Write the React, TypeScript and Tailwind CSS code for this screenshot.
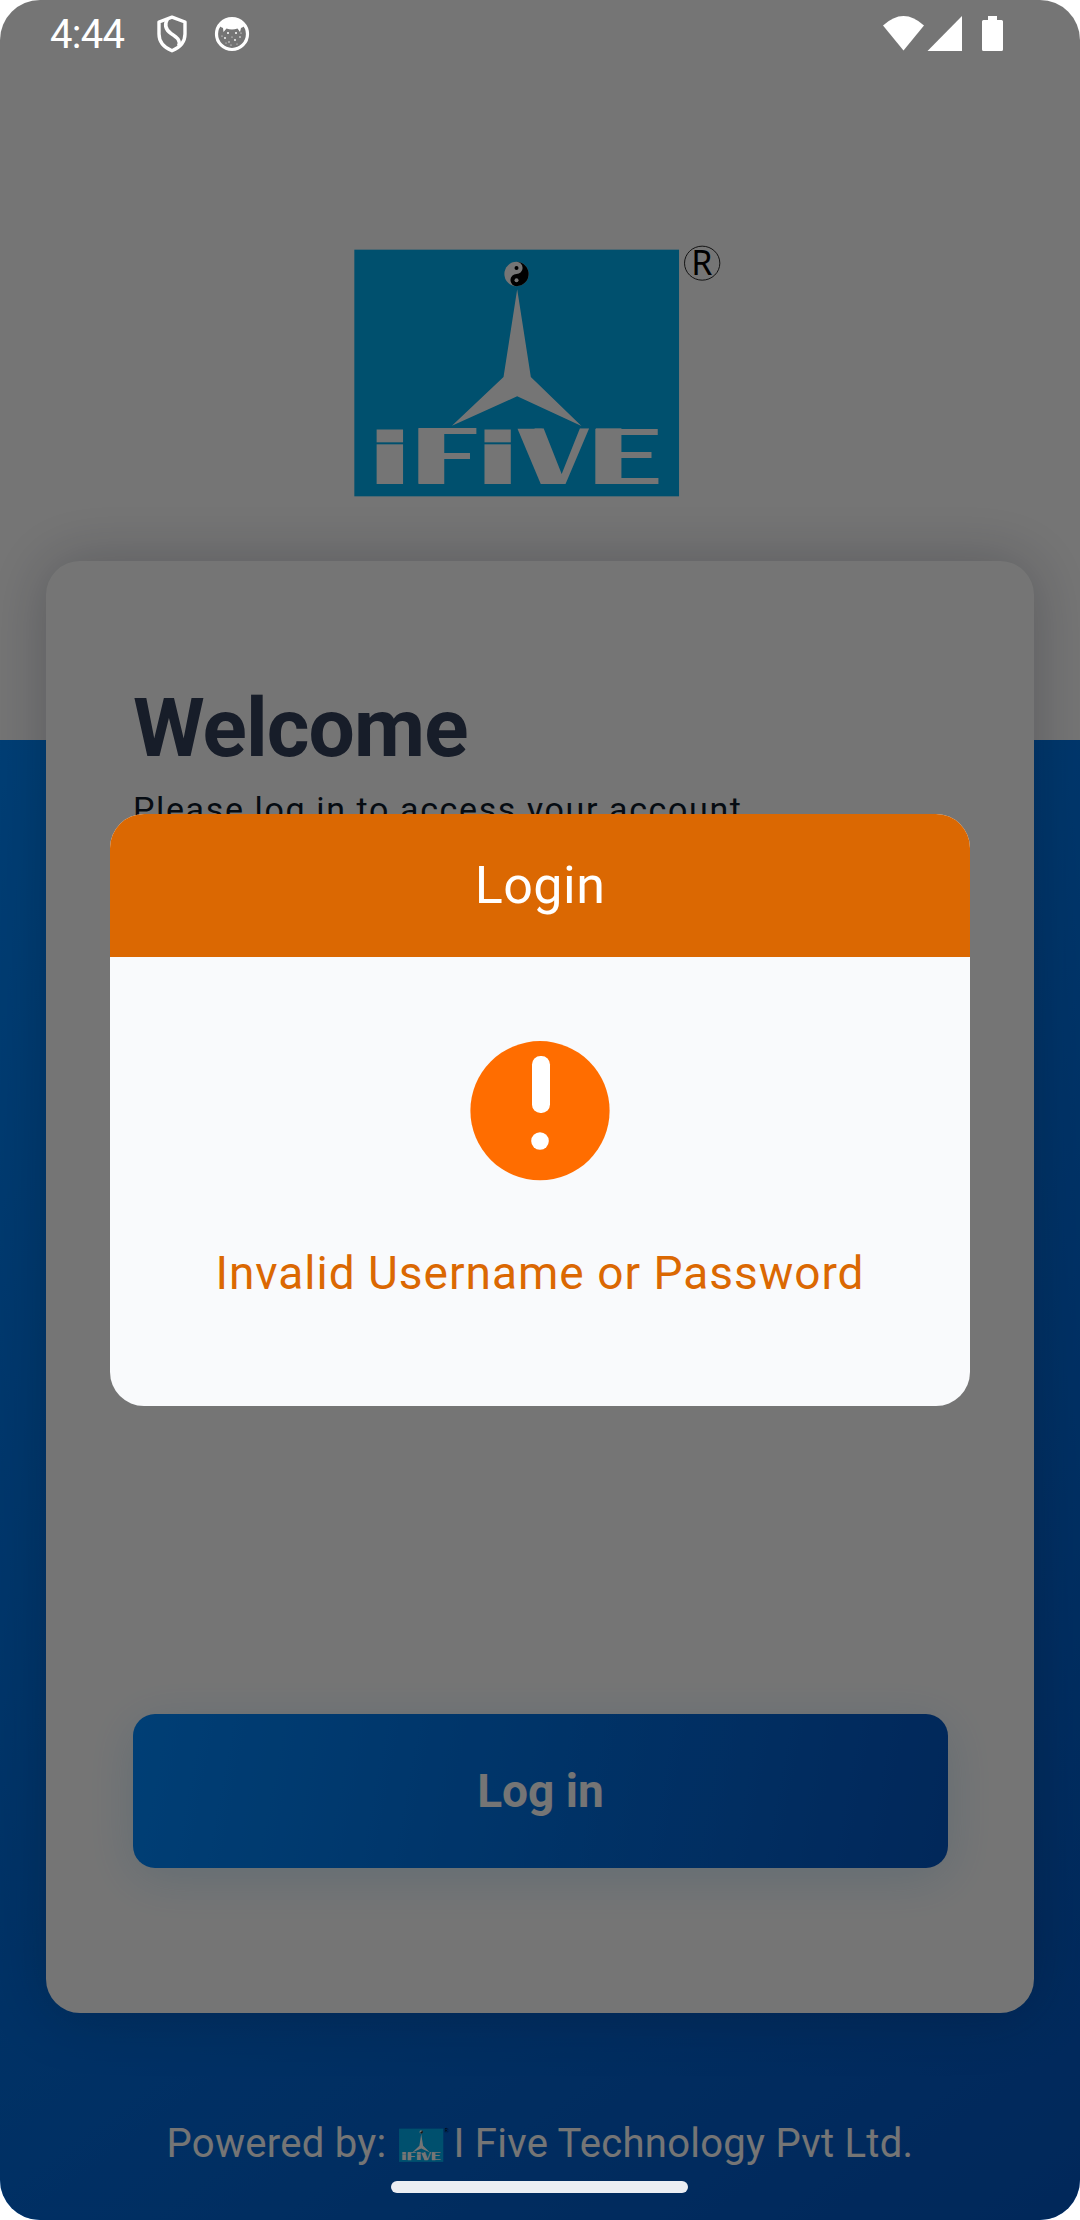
import React from "react";

const letters = [
  { ch: "I", x: 32.8, w: 229, size: 230 },
  { ch: "F", x: 201.6, w: 217.6, size: 235 },
  { ch: "I", x: 357, w: 228, size: 230 },
  { ch: "V", x: 578.6, w: 171, size: 235 },
  { ch: "E", x: 730.5, w: 237.6, size: 235 },
];

function Logo({ className }: { className: string }) {
  return (
    <svg viewBox="40 44 1102 756" preserveAspectRatio="none" className={className}>
      <rect x="41" y="58" width="975" height="740" fill="#00aeef" />
      <circle cx="528" cy="131" r="36.5" fill="#fff" />
      <path d="M528 94.5a36.5 36.5 0 0 1 0 73a18.25 18.25 0 0 1 0-36.5a18.25 18.25 0 0 0 0-36.5z" fill="#000" />
      <circle cx="528" cy="113" r="6" fill="#000" />
      <circle cx="528" cy="150" r="6" fill="#fff" />
      <path d="M530 177L571 440L723 587L530 498L334 586L489 440z" fill="#fff" />
      {letters.map((l, i) => (
        <text
          key={i}
          x={l.x}
          y="761"
          textLength={l.w}
          lengthAdjust="spacingAndGlyphs"
          fontFamily="Roboto, sans-serif"
          fontSize={l.size}
          fill="#fff"
        >
          {l.ch}
        </text>
      ))}
      {/* heavy stems of the wordmark and the gaps under the dots */}
      <rect x="234" y="594" width="77" height="167" fill="#fff" />
      <rect x="766" y="594" width="77" height="167" fill="#fff" />
      <rect width="73" height="166" transform="translate(531 595) skewX(22.8)" fill="#fff" />
      <rect x="100" y="636" width="96" height="6" fill="#00aeef" />
      <rect x="424" y="636" width="96" height="6" fill="#00aeef" />
      <ellipse cx="1085.5" cy="98.5" rx="53" ry="51" fill="none" stroke="#000" strokeWidth="2.5" />
      <text x="1053" y="135" fontFamily="'Noto Sans', sans-serif" fontSize="102" fill="#000">
        R
      </text>
    </svg>
  );
}

function StatusBar() {
  return (
    <div className="relative z-20 flex h-[67px] items-center justify-between pl-[50px] pr-[77px] text-white">
      <div className="flex h-full items-center">
        <span className="w-[106px] pt-px text-[40px] leading-[67px] tracking-[-0.7px]">4:44</span>
        <svg viewBox="0 0 32 38" className="h-[38px] w-8">
          <path d="M16 2.200L29 7V19C29 26.500 24 32.500 16 35.800C8 32.500 3 26.500 3 19V7Z" fill="none" stroke="#fff" strokeWidth="3.4" strokeLinejoin="round" />
          <path d="M11.500 4C8 10 10 15 15 18.500C21 22.500 25 25 22.500 31" fill="none" stroke="#fff" strokeWidth="3.4" />
        </svg>
        <svg viewBox="0 0 36 36" className="ml-[26px] h-9 w-9">
          <circle cx="18" cy="18" r="15.500" fill="none" stroke="#fff" strokeWidth="3.2" />
          <path d="M5 9Q18-4 31 9Q29 12 27 12L26 16L23.500 12.500Q18 14.500 12.500 12.500L9.500 16L9 12Q7 12 5 9Z" fill="#fff" />
          <g fill="#fff">
            <circle cx="14" cy="17" r="1" /><circle cx="22" cy="17" r="1" />
            <circle cx="8" cy="20" r=".6" /><circle cx="11" cy="22" r=".9" />
            <circle cx="18" cy="21" r=".6" /><circle cx="21" cy="24" r=".9" />
            <circle cx="15" cy="26" r=".7" /><circle cx="26" cy="21" r=".8" />
            <circle cx="17" cy="29" r=".6" /><circle cx="27" cy="17" r=".6" />
            <circle cx="12" cy="27" r=".5" /><circle cx="23" cy="28" r=".5" />
          </g>
        </svg>
      </div>
      <svg viewBox="0 0 120 36" className="h-9 w-[120px]">
        <path d="M0 9.500Q20.500-9.500 41 9.500L20.500 34.500Z" fill="#fff" />
        <path d="M79 0V35H44.500Z" fill="#fff" />
        <path d="M105 0h9v4h4.500a1.500 1.500 0 0 1 1.500 1.500v28a1.500 1.500 0 0 1-1.500 1.500h-18a1.500 1.500 0 0 1-1.500-1.500v-28a1.500 1.500 0 0 1 1.500-1.500h4.500z" fill="#fff" />
      </svg>
    </div>
  );
}

function LoginDialog() {
  return (
    <div className="absolute inset-0 z-10 flex flex-col items-center bg-black/54 pt-[814px]">
      <div className="flex h-[592px] w-[860px] flex-col overflow-hidden rounded-[34px] bg-[#f9fafc]">
        <div className="flex h-[143px] items-center justify-center bg-[#db6802] text-[52px] tracking-[0.5px] text-white">
          Login
        </div>
        <div className="flex flex-col items-center pt-[84px]">
          <svg viewBox="0 0 140 140" className="h-[140px] w-[140px]">
            <circle cx="70" cy="69.7" r="69.6" fill="#ff6d00" />
            <rect x="62" y="15" width="18" height="57" rx="8.5" fill="#fff" />
            <circle cx="70" cy="100" r="8.8" fill="#fff" />
          </svg>
          <p className="mt-[62px] whitespace-nowrap text-[46px] leading-[60px] tracking-[1px] text-[#db6802]">
            Invalid Username or Password
          </p>
        </div>
      </div>
    </div>
  );
}

export default function App() {
  return (
    <div className="h-[2220px] w-[1080px] bg-white font-['Roboto',sans-serif]">
      <div className="relative h-full w-full overflow-hidden rounded-[40px] bg-[linear-gradient(143.9deg,#0089ff,#0457c4)] bg-[length:100%_1480px] bg-[position:0_740px] bg-no-repeat">
        <StatusBar />
        <main className="flex flex-col items-center pt-[178px]">
          <Logo className="h-[252px] w-[367px] translate-x-[-3px] overflow-visible" />
          <section className="mt-[64px] flex h-[1452px] w-[988px] flex-col rounded-[34px] bg-white px-[87px] pt-[119px] shadow-[0_0_60px_rgba(20,25,50,0.25)]">
            <h1 className="text-[82px] font-bold leading-[96px] tracking-[-0.9px] text-[#343f59]">Welcome</h1>
            <p className="mt-[11px] text-[34px] leading-[44px] tracking-[1.62px] text-[#0f1b2b]">
              Please log in to access your account
            </p>
            <button className="mt-auto mb-[145px] h-[154px] w-[815px] rounded-[22px] bg-[linear-gradient(100.7deg,#0089ff,#0457c4)] text-[46px] font-bold text-white shadow-[0_10px_50px_rgba(0,140,225,0.17)]">
              Log in
            </button>
          </section>
          <footer className="mt-[107px] flex h-[48px] items-center whitespace-nowrap text-[40px] leading-[48px] text-white">
            <span className="tracking-[0.28px]">Powered by:</span>
            <Logo className="ml-[13px] mt-[1px] h-[34px] w-[50px] overflow-visible" />
            <span className="ml-[4px] tracking-[0.28px]">I Five Technology Pvt Ltd.</span>
          </footer>
        </main>
        <LoginDialog />
        <div className="absolute bottom-[27px] left-[391px] z-20 h-[12px] w-[297px] rounded-full bg-[#ebeef3]" />
      </div>
    </div>
  );
}
